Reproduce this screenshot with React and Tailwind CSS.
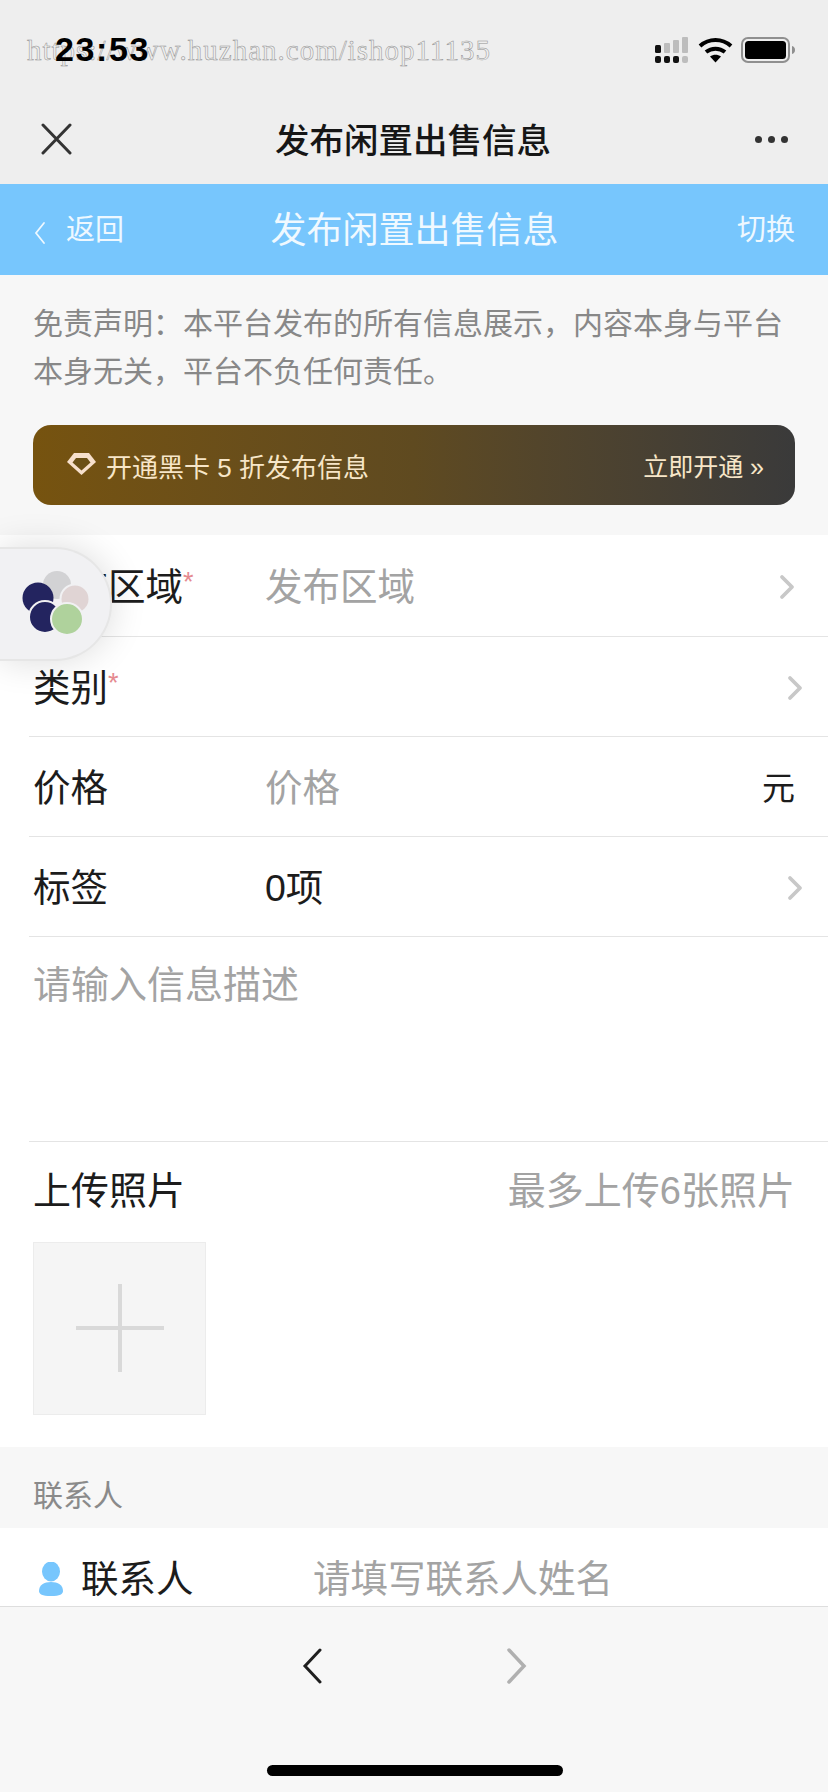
const cjk = "font-['Liberation_Sans','Noto_Sans_CJK_SC',sans-serif]";

const Chevron = ({ className = "" }) => (
  <svg className={className} width="16" height="26" viewBox="0 0 16 26" fill="none" stroke="#c8c8c8" strokeWidth="3.8" strokeLinecap="round" strokeLinejoin="round">
    <path d="M3 3l10 10L3 23" />
  </svg>
);

const Star = () => <span className="text-[#e58a8f] text-[27px] leading-none self-start mt-[10px]">*</span>;

const Row = ({ label, required, value, muted, right, height = "h-[100px]" }) => (
  <div className={`ml-[29px] ${height} border-b border-[#e4e4e4] flex items-center pr-[33px] pt-[3px]`}>
    <div className="w-[236px] flex items-center text-[37.5px] text-[#1c1c1c] pl-[4px]">
      {label}
      {required && <Star />}
    </div>
    <div className={`flex-1 text-[37.5px] ${muted ? "text-[#a3a3a3]" : "text-[#1c1c1c]"}`}>{value}</div>
    {right}
  </div>
);

const StatusBar = () => (
  <div className="relative h-[92px]">
    <div className="absolute left-[27px] top-[29px] font-['Liberation_Serif',serif] text-[29px] tracking-[1px] text-transparent [-webkit-text-stroke:0.5px_#909090]">
      https://www.huzhan.com/ishop11135
    </div>
    <div className="absolute left-[55px] top-[29px] font-['Liberation_Sans',sans-serif] font-bold text-[34px] tracking-[1.6px] leading-[40px] text-black">23:53</div>
    <div className="absolute left-[654px] top-[36px]">
      <svg width="150" height="28" viewBox="0 0 150 28">
        <rect x="1" y="9" width="6" height="8" rx="1.5" fill="#111" />
        <rect x="10" y="7" width="6" height="10" rx="1" fill="#bdbdbd" />
        <rect x="19" y="4" width="6" height="13" rx="1" fill="#bdbdbd" />
        <rect x="28" y="1" width="6" height="16" rx="1" fill="#bdbdbd" />
        <rect x="1" y="20" width="6" height="7" rx="2" fill="#111" />
        <rect x="10" y="20" width="6" height="7" rx="2" fill="#111" />
        <rect x="19" y="20" width="6" height="7" rx="2" fill="#111" />
        <rect x="28" y="20" width="6" height="7" rx="2" fill="#bdbdbd" />
        <path d="M46 10c9-8 22-8 31 0" fill="none" stroke="#000" strokeWidth="4" />
        <path d="M52 16c5.500-4.500 13.500-4.500 19 0" fill="none" stroke="#000" strokeWidth="4" />
        <path d="M56 20.500c3.500-2.500 7.500-2.500 11 0l-5.500 6z" fill="#000" />
        <rect x="88" y="2" width="47" height="24" rx="6" fill="none" stroke="#8f8f8f" strokeWidth="2" />
        <rect x="91" y="5" width="41" height="18" rx="3.500" fill="#000" />
        <path d="M138 10c2 .5 3 2 3 4s-1 3.500-3 4z" fill="#8f8f8f" />
      </svg>
    </div>
  </div>
);

const WechatBar = () => (
  <div className="relative h-[92px] flex items-center justify-center pt-[6px]">
    <svg className="absolute left-[41px] top-[31px]" width="32" height="32" viewBox="0 0 32 32" fill="none" stroke="#333" strokeWidth="3" strokeLinecap="round">
      <path d="M2 2l27 28M29 2L2 30" />
    </svg>
    <span className="text-[34.5px] font-medium text-[#161616] leading-none ml-[-2px]">发布闲置出售信息</span>
    <div className="absolute left-[755px] top-[44px] flex gap-[6px]">
      <span className="size-[7px] rounded-full bg-[#333]" />
      <span className="size-[7px] rounded-full bg-[#333]" />
      <span className="size-[7px] rounded-full bg-[#333]" />
    </div>
  </div>
);

const BlueBar = () => (
  <div className="relative h-[91px] bg-[#77c6fd] flex items-center justify-between text-white pl-[34px] pr-[33px] pt-[2px]">
    <div className="flex items-center w-[130px] gap-[20px] text-[29px] text-[#eef8ff]">
      <svg width="12" height="24" viewBox="0 0 12 24" fill="none" stroke="#eef8ff" strokeWidth="1.800" strokeLinecap="round" className="mt-[4px]">
        <path d="M10 2L2 12l8 10" />
      </svg>
      返回
    </div>
    <span className="text-[36px] text-[#f0f9ff]">发布闲置出售信息</span>
    <span className="text-[29px] text-[#eef8ff] w-[130px] text-right">切换</span>
  </div>
);

const VipBanner = () => (
  <div className="mx-[33px] mt-[29px] h-[80px] rounded-[18px] bg-gradient-to-r from-[#76530f] via-[#5f4a20] to-[#3a3a3a] flex items-center justify-between pl-[33px] pr-[31px] pt-[6px] text-[26px] text-[#f7e6c8]">
    <div className="flex items-center gap-[9px]">
      <svg width="31" height="24" viewBox="0 0 31 24" className="mb-[8px]">
        <path d="M8 1h15l7 9-14.500 13L1 10z" fill="#f7e0cc" />
        <path d="M10 6h11l3.500 4.500-9 8-9-8z" fill="#6b5016" />
      </svg>
      <span>开通黑卡 5 折发布信息</span>
    </div>
    <span className="text-[25px]">立即开通 »</span>
  </div>
);

const FloatButton = () => (
  <div className="absolute left-0 top-[547px] w-[112px] h-[114px] rounded-r-full border-2 border-l-0 border-[#e6e6e6] bg-[#f1f1f3] shadow-[0_0_36px_rgba(0,0,0,0.14)]">
    <svg className="absolute left-[20px] top-[21px]" width="72" height="72" viewBox="0 0 72 72">
      <circle cx="37" cy="15" r="14" fill="#d2d2d4" />
      <circle cx="55" cy="29" r="14.500" fill="#e0d4d4" stroke="#f1f1f3" strokeWidth="2" />
      <circle cx="18" cy="28" r="15.500" fill="#23245f" />
      <circle cx="25" cy="47" r="16" fill="#23245f" stroke="#f1f1f3" strokeWidth="2" />
      <circle cx="47" cy="49" r="16" fill="#afd29c" stroke="#f1f1f3" strokeWidth="2" />
    </svg>
  </div>
);

export default function App() {
  return (
    <div className={`relative w-[828px] h-[1792px] overflow-hidden bg-[#f7f7f7] ${cjk}`}>
      <div className="bg-[#eeeeee]">
        <StatusBar />
        <WechatBar />
      </div>
      <BlueBar />

      <div className="h-[260px]">
        <p className="pt-[25px] pl-[33px] pr-[40px] text-[30px] leading-[48px] text-[#888888]">
          免责声明：本平台发布的所有信息展示，内容本身与平台本身无关，平台不负任何责任。
        </p>
        <VipBanner />
      </div>

      <div className="bg-white h-[912px]">
        <Row label="发布区域" required value="发布区域" muted right={<Chevron />} height="h-[102px]" />
        <Row label="类别" required value="" right={<Chevron className="mr-[-8px]" />} />
        <Row label="价格" value="价格" muted right={<span className="text-[33px] text-[#1c1c1c] mt-[2px]">元</span>} />
        <Row label="标签" value="0项" right={<Chevron className="mr-[-8px]" />} />

        <div className="ml-[29px] h-[205px] border-b border-[#e4e4e4] pl-[4px] pt-[20px] text-[38px] text-[#a3a3a3]">
          请输入信息描述
        </div>

        <div className="px-[33px] pt-[25px]">
          <div className="flex justify-between items-center h-[48px] text-[38px]">
            <span className="text-[#1c1c1c]">上传照片</span>
            <span className="text-[#a3a3a3]">最多上传6张照片</span>
          </div>
          <div className="relative mt-[27px] size-[173px] bg-[#f5f5f5] border border-[#ececec] flex items-center justify-center">
            <svg width="90" height="90" viewBox="0 0 90 90" stroke="#d9d9d9" strokeWidth="4">
              <path d="M45 0v88M1 44h88" />
            </svg>
          </div>
        </div>
      </div>

      <div className="h-[81px] pl-[33px] pt-[31px] text-[30px] leading-[36px] text-[#8a8a8a]">联系人</div>

      <div className="bg-white h-[79px] border-b border-[#dedede] flex items-center pl-[38px] pt-[24px] text-[37.5px] leading-[52px]">
        <svg width="26" height="34" viewBox="0 0 26 34" fill="#77c6fd">
          <ellipse cx="13" cy="9.500" rx="9" ry="10" />
          <path d="M1 29c0-6 5-9 12-9s12 3 12 9c0 3-3 5-12 5S1 32 1 29z" />
        </svg>
        <span className="ml-[17px] w-[232px] text-[#1c1c1c]">联系人</span>
        <span className="text-[#a3a3a3]">请填写联系人姓名</span>
      </div>

      <div className="relative h-[185px]">
        <div className="flex justify-center gap-[185px] pt-[41px]">
          <svg width="20" height="36" viewBox="0 0 20 36" fill="none" stroke="#1f1f1f" strokeWidth="3" strokeLinecap="round">
            <path d="M18 2L3 18l15 16" />
          </svg>
          <svg width="20" height="36" viewBox="0 0 20 36" fill="none" stroke="#b0b0b0" strokeWidth="3.500" strokeLinecap="round">
            <path d="M2 2l15 16L2 34" />
          </svg>
        </div>
        <div className="absolute left-[267px] top-[158px] w-[296px] h-[11px] rounded-full bg-black" />
      </div>

      <FloatButton />
    </div>
  );
}
